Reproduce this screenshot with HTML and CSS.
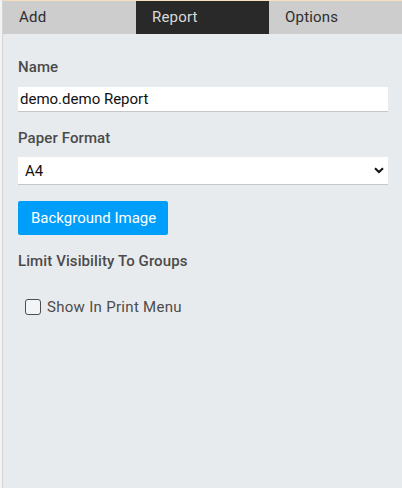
FILE: index.html
```html
<!DOCTYPE html>
<html>
<head>
<meta charset="utf-8">
<link rel="stylesheet" href="styles.css">
</head>
<body>
<div class="frame">
  <div class="tabs">
    <div class="tab">Add</div>
    <div class="tab active">Report</div>
    <div class="tab">Options</div>
  </div>
  <div class="panel">
    <div class="field">
      <label class="label">Name</label>
      <div class="input">demo.demo Report</div>
    </div>
    <div class="field">
      <label class="label">Paper Format</label>
      <div class="select">
        <span>A4</span>
        <svg class="chev" width="10" height="7" viewBox="0 0 10 7"><path d="M1 1.2 L5 5 L9 1.2" fill="none" stroke="#111" stroke-width="2"/></svg>
      </div>
    </div>
    <div class="btn">Background Image</div>
    <div class="label groups">Limit Visibility To Groups</div>
    <div class="check">
      <span class="box"></span>
      <span class="check-text">Show In Print Menu</span>
    </div>
  </div>
</div>
</body>
</html>
```
FILE: styles.css
```css
html, body {
  margin: 0;
  padding: 0;
  width: 402px;
  height: 488px;
  overflow: hidden;
  font-family: "Roboto", "Liberation Sans", sans-serif;
}
body {
  background: #f3f3f3;
}
.frame {
  border-top: 1px solid #f5dfbf;
  margin-left: 3px;
  height: 487px;
  display: flex;
  flex-direction: column;
  background: #e8ebee;
  box-shadow: -1px 0 0 #d4d4d4;
}
.tabs {
  display: flex;
  height: 33px;
  background: #cdcdcd;
}
.tab {
  width: 133px;
  box-sizing: border-box;
  padding-left: 16px;
  font-size: 15px;
  line-height: 33px;
  color: #2e2e2e;
  letter-spacing: 0.2px;
}
.tab.active {
  background: #292929;
  color: #d9d9d9;
}
.panel {
  padding: 25px 14px 0 15px;
  display: flex;
  flex-direction: column;
}
.field {
  display: flex;
  flex-direction: column;
}
.label {
  font-size: 15px;
  font-weight: 500;
  color: #4a4a4a;
  line-height: 17px;
  letter-spacing: 0.1px;
}
.input {
  margin-top: 11px;
  height: 24px;
  background: #fff;
  border-bottom: 1px solid #c6c6c6;
  font-size: 15px;
  line-height: 25px;
  padding-left: 2px;
  color: #111;
  margin-bottom: 18px;
}
.select {
  margin-top: 10px;
  height: 27px;
  background: #fff;
  border-bottom: 1px solid #c6c6c6;
  font-size: 15px;
  line-height: 28px;
  padding-left: 7px;
  padding-right: 4px;
  color: #111;
  display: flex;
  justify-content: space-between;
  align-items: center;
}
.btn {
  margin-top: 16px;
  align-self: flex-start;
  background: #009efb;
  color: #fff;
  font-size: 15px;
  line-height: 34px;
  height: 34px;
  padding: 0 12px 0 13px;
  border-radius: 2px;
}
.groups {
  margin-top: 18px;
}
.check {
  margin-top: 28px;
  margin-left: 7px;
  display: flex;
  align-items: center;
  gap: 6px;
}
.box {
  width: 14px;
  height: 14px;
  border: 1.5px solid #4d4d4d;
  border-radius: 3px;
  background: #f3f4f6;
}
.check-text {
  font-size: 15px;
  color: #4c4c4c;
  letter-spacing: 0.3px;
}
```
